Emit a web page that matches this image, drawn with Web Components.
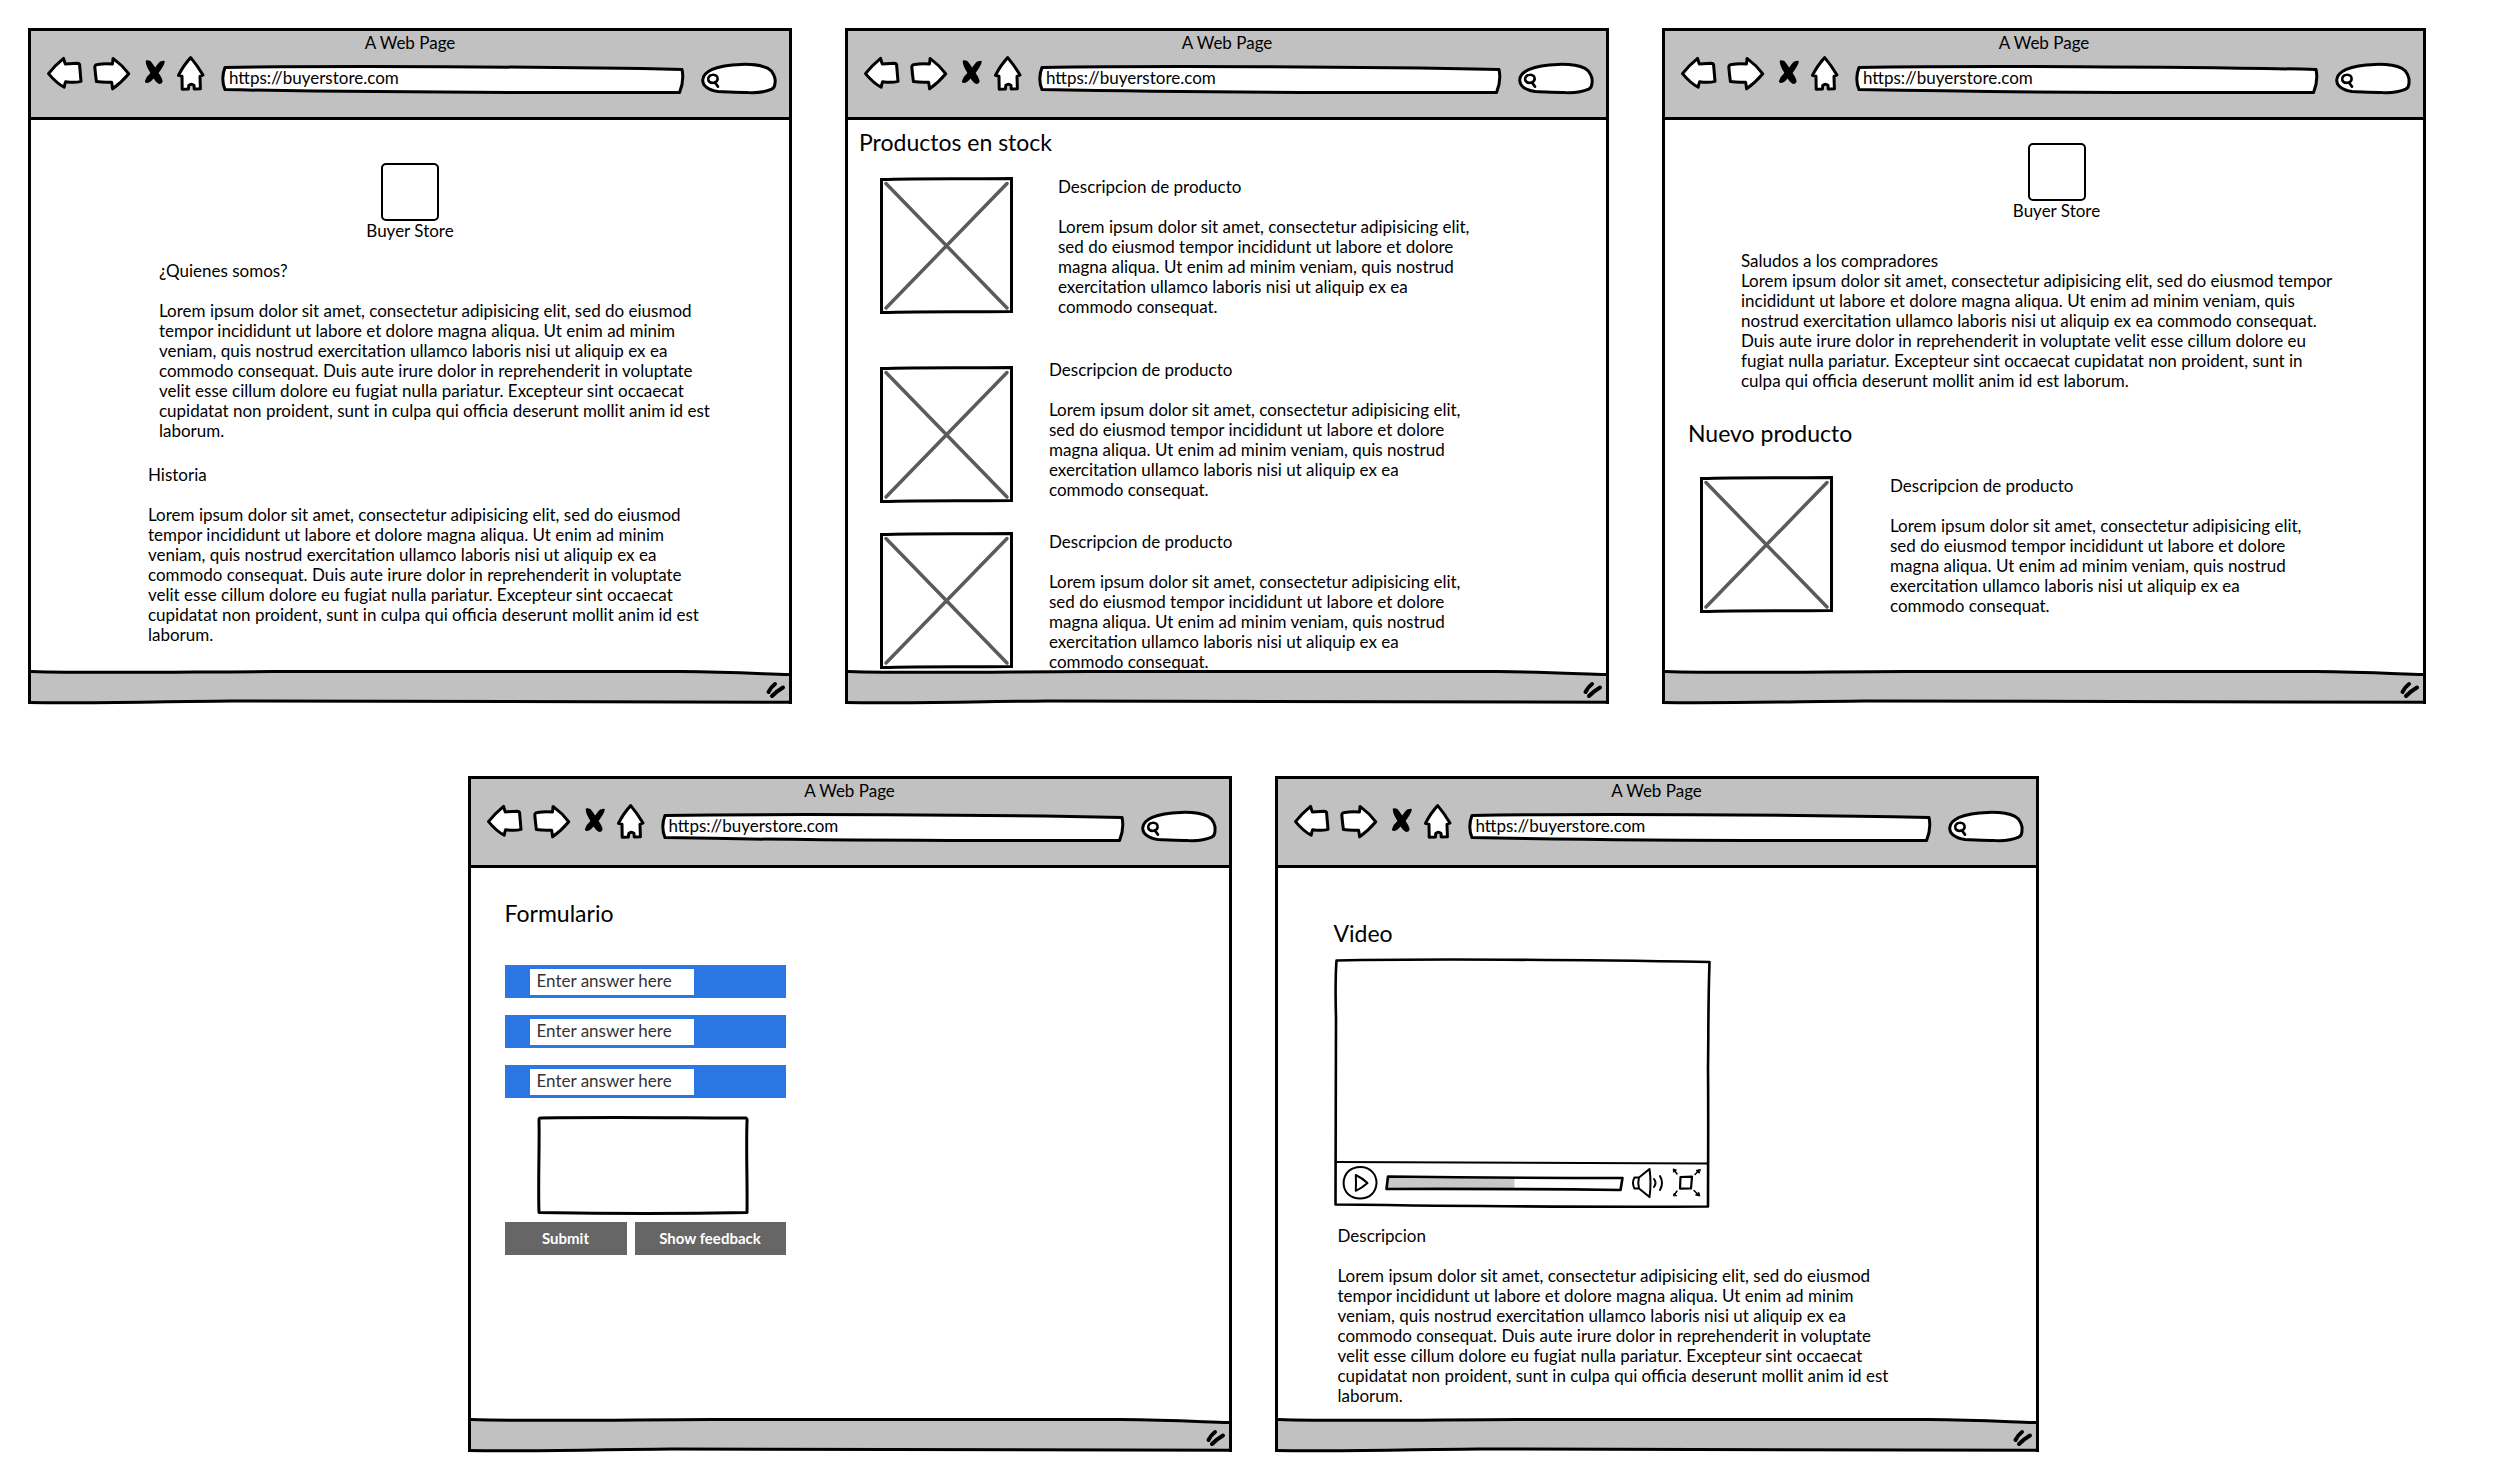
<!DOCTYPE html>
<html lang="es">
<head>
<meta charset="utf-8">
<title>Buyer Store wireframes</title>
<style>
  :root { --frame-width: calc((100vw - 214px) / 3); }
  body {
    margin: 0; padding: 28px 0; background: #fff; color: #000;
    font: 17px/20px Lato, "Liberation Sans", sans-serif;
    display: flex; flex-direction: column; gap: 72px; box-sizing: border-box;
  }
  main { display: contents; }
  .row { display: flex; }
  .row.top { gap: 53px; padding-left: 28px; }
  .row.bottom { gap: 43px; justify-content: center; }
  wire-browser { width: var(--frame-width); flex: none; }
  h2, h3, p { margin: 0; font-weight: 400; }
  h2 { font-size: 23px; line-height: 28px; }
  h3 { font-size: inherit; }

  .about { padding-top: 43px; }
  .about text-block:first-of-type { margin: 20px 0 24px 128px; }
  .about text-block:last-of-type { margin-left: 117px; }

  .stock { padding: 8px 0 0 11px; }
  .stock product-card { margin-left: 21px; }
  .stock product-card:nth-of-type(1) { margin-top: 21px; --gap: 45px; }
  .stock product-card:nth-of-type(2) { margin-top: 43px; --gap: 36px; --drop: 6px; }
  .stock product-card:nth-of-type(3) { margin-top: 29px; --gap: 36px; }

  .home { padding-top: 23px; }
  .home brand-mark { padding-left: 25px; }
  .home text-block { margin: 30px 0 28px 76px; }
  .home h2 { margin-left: 23px; }
  .home product-card { margin: 29px 0 0 35px; --gap: 57px; }

  .form { padding: 31px 0 0 34px; }
  .form answer-form { margin-top: 38px; }

  .media { padding: 51px 0 0 56px; }
  .media sketch-player { margin: 11px 0 18px; }
  .media text-block { margin-left: 4px; }
</style>
</head>
<body>

<template id="tpl-browser">
  <style>
    :host { display: flex; flex-direction: column; box-sizing: border-box; aspect-ratio: 764 / 676;
            border: 3px solid #000; border-bottom: 0; background: #fff; }
    header { background: #c1c1c1; border-bottom: 3px solid #000; padding: 2px 12px 23px 15px; }
    .title { text-align: center; padding-right: 3px; margin-bottom: 3px; }
    .bar { display: flex; gap: 17px; height: 38px; align-items: flex-end; }
    nav { display: flex; gap: 10px; align-self: flex-start; }
    button { all: unset; display: block; cursor: pointer; }
    svg { display: block; overflow: visible; }
    .line { fill: #fff; stroke: #000; stroke-width: 3; stroke-linejoin: round; stroke-linecap: round; }
    label { display: grid; }
    label > svg, label > input { grid-area: 1 / 1; width: 100%; height: 100%; box-sizing: border-box; min-width: 0; }
    input { appearance: none; border: 0; outline: 0; background: none; margin: 0; font: inherit; color: inherit; }
    .url { flex: 1; height: 29px; min-width: 0; }
    .url input { padding: 0 8px 4px 7px; }
    .find { width: 76px; height: 32px; }
    .find input { padding: 0 8px 0 22px; }
    .view { flex: 1; min-height: 0; overflow: hidden; }
    footer svg { width: 100%; height: 34px; }
  </style>
  <header>
    <div class="title"></div>
    <div class="bar">
      <nav>
        <button aria-label="Back"><svg width="37" height="36" viewBox="0 0 37 36"><path class="line" d="M2.5 17.6 C7 12 12 7 17.6 2.4 C18 4 18.6 6 19.3 7.9 L31 7.2 Q33.4 7.2 33.6 9 L35 25.4 Q29 27 19.6 25.8 Q18.8 28 18.2 31.2 C12 28 7 23 2.5 17.6Z"/></svg></button>
        <button aria-label="Forward"><svg width="38" height="36" viewBox="0 0 38 36"><path class="line" d="M1.8 11 Q2 8.6 4.6 8.4 Q12 7.2 19.4 8 Q20 5 20 2.4 Q29 9 35.8 17.8 Q28 27 19.6 32.8 Q19.2 29 18.6 26.2 Q10 26.6 3.4 25.6 Q2.4 18 1.8 11Z"/></svg></button>
        <button aria-label="Stop"><svg width="26" height="36" viewBox="0 0 26 36"><path d="M4.8 4.6 Q9 3 11.4 7.4 L14.2 11.6 Q18 5.6 20 5.2 Q24 4.400 23.800 5.400 Q23.400 9 17.600 17 Q21.600 22.800 21.600 25.600 Q21 28.200 18.600 28 Q16 27.600 12.600 22.400 Q8.600 27 5.800 27 Q3.400 26.600 4.200 24.400 Q5.400 20.600 9.400 17 Q4.200 9 4.800 4.600Z"/></svg></button>
        <button aria-label="Home"><svg width="28" height="36" viewBox="0 0 28 36"><path class="line" d="M13.700 1.600 Q20 9 26 19 L23 20.400 L23.400 32.800 L17.200 33 L17 29.400 Q14.400 27 11.800 29.400 L11.400 33 L5.200 33.200 L5 20.200 L1.400 19.400 Q7 8.600 13.700 1.600Z"/></svg></button>
      </nav>
      <label class="url"><svg viewBox="0 0 462 29" preserveAspectRatio="none"><path class="line" d="M3 2.400 C120 .8 320 1.600 460 4.400 C461.600 12 460.600 20 457.600 27.400 C300 28 150 27.400 3 24.600 Q-1.400 14 3 2.400Z"/></svg><input type="text" aria-label="Address"></label>
      <label class="find"><svg viewBox="0 0 76 32"><path class="line" d="M1.700 18 C2 10 14 3 40 2.400 C52 2 62 4 67 6.400 C72 9 75 16 74 21 C74 24 73 26 70.700 27.200 C63 30.600 55 31 47 30.600 C36 29.800 26 30 17 29.600 C8 28 1.700 24 1.700 18Z"/><path d="M11.400 12.800 C15 12.400 17 14.600 16.600 17.600 C16 21 9 22.400 7.400 18.600 C6.400 15.600 8.400 13 11.400 12.800Z M14 20.600 L17 24.600" fill="none" stroke="#000" stroke-width="2.600" stroke-linecap="round"/></svg><input type="text" aria-label="Search"></label>
    </div>
  </header>
  <div class="view"><slot></slot></div>
  <footer><svg viewBox="0 0 758 34" preserveAspectRatio="none">
    <path d="M0 1 L60 2.500 L300 1.500 L650 1.500 L758 4.500 V32 H0Z" fill="#c1c1c1"/>
    <path d="M0 1.500 C60 3.400 140 2 240 1.600 C400 1 540 .6 650 1.600 C700 2.200 730 3.800 758 4.600" fill="none" stroke="#000" stroke-width="3"/>
    <path d="M-3 32.400 C60 33.400 120 31.600 200 31 C340 31.600 500 33 761 32.200" fill="none" stroke="#000" stroke-width="3"/>
    <path d="M744 14 Q740 17 737.500 22 M752 17.500 Q746 21 741 26" fill="none" stroke="#000" stroke-width="4" stroke-linecap="round"/>
  </svg></footer>
</template>

<template id="tpl-brand">
  <style>
    :host { display: flex; flex-direction: column; align-items: center; }
    .box { width: 58px; height: 58px; box-sizing: border-box; border: 2px solid #000; border-radius: 5px; }
  </style>
  <div class="box"></div>
  <div class="name"><slot></slot></div>
</template>

<template id="tpl-text">
  <style>
    :host { display: flex; flex-direction: column; gap: 20px; white-space: nowrap; }
    :host([tight]) { gap: 0; }
  </style>
  <slot></slot>
</template>

<template id="tpl-product">
  <style>
    :host { display: flex; align-items: flex-start; gap: var(--gap, 40px); }
    svg { display: block; flex: none; margin-top: var(--drop, 0); }
  </style>
  <svg width="133" height="137" viewBox="0 0 133 137" role="img" aria-label="Imagen del producto">
    <path d="M1.500 2.500 C40 1 90 2 131.500 1.500 V134.500 C90 135 50 134 1.500 135.500Z" fill="#fff" stroke="#000" stroke-width="3"/>
    <path d="M6 6.500 L127 131 M127 6.500 L6 131" stroke="#5b5b5b" stroke-width="3.500" stroke-linecap="round"/>
  </svg>
  <text-block><slot></slot></text-block>
</template>

<template id="tpl-form">
  <style>
    :host { display: block; }
    form { display: flex; flex-direction: column; width: 281px; gap: 17px; }
    .field { display: block; background: #2b78e4; padding: 4px 25px 3px; }
    .field input { display: block; box-sizing: border-box; width: 164px; height: 26px; border: 0; padding: 0 7px 3px;
            background: #fff; color: #333; font: inherit; outline: 0; }
    .notes { display: grid; width: 212px; height: 99px; margin: 1px 0 -10px 32px; }
    .notes > * { grid-area: 1 / 1; width: 100%; height: 100%; box-sizing: border-box; }
    textarea { border: 0; background: none; resize: none; outline: 0; padding: 8px; font: inherit; }
    .actions { display: flex; gap: 8px; }
    button { border: 0; height: 33px; padding: 0 0 1px; background: #666; color: #fff; font: inherit; font-size: 15px; font-weight: 700; flex: 122; }
    button + button { flex: 151; }
  </style>
  <form onsubmit="return false">
    <label class="field"><input type="text" value="Enter answer here" aria-label="Respuesta 1"></label>
    <label class="field"><input type="text" value="Enter answer here" aria-label="Respuesta 2"></label>
    <label class="field"><input type="text" value="Enter answer here" aria-label="Respuesta 3"></label>
    <label class="notes">
      <svg viewBox="0 0 212 99" preserveAspectRatio="none"><path d="M2 3.500 Q2 2 4 2 C80 .8 150 2 209 2 Q210.500 3 210 5 C209 35 210.500 65 210 96.500 C150 97.600 70 97.600 2 96.500 C1 70 2.600 30 2 3.500Z" fill="#fff" stroke="#000" stroke-width="3" stroke-linejoin="round"/></svg>
      <textarea aria-label="Comentarios"></textarea>
    </label>
    <div class="actions"><button type="submit">Submit</button><button type="button">Show feedback</button></div>
  </form>
</template>

<template id="tpl-player">
  <style>
    :host { display: grid; width: 377px; height: 250px; }
    .outline, .layer { grid-area: 1 / 1; width: 100%; height: 100%; box-sizing: border-box; }
    .layer { display: flex; flex-direction: column; justify-content: flex-end; padding: 0 9px 7px 8px; }
    .controls { display: flex; align-items: center; gap: 7px; }
    svg { display: block; overflow: visible; fill: none; stroke: #000; stroke-width: 2; stroke-linejoin: round; stroke-linecap: round; }
    button { all: unset; display: block; cursor: pointer; }
    .seek { flex: 1; display: grid; height: 16px; min-width: 0; }
    .seek > * { grid-area: 1 / 1; width: 100%; height: 100%; margin: 0; min-width: 0; }
    input { opacity: 0; }
  </style>
  <svg class="outline" viewBox="0 0 377 250" preserveAspectRatio="none">
    <path d="M2.500 2.500 C100 .6 250 2 375.500 4 C374 50 374.500 80 374 110 C374.500 160 374 210 374 248.500 C250 249.500 120 248 1.500 246.500 C2 160 1.600 110 2 60 Q1 25 2.500 2.500Z" fill="#fff" stroke-width="2.600"/>
    <path d="M1.500 204 Q190 204.600 374 205.500"/>
  </svg>
  <div class="layer"><div class="controls">
    <button aria-label="Play"><svg width="36" height="36" viewBox="0 0 36 36"><path d="M18.500 2 C28 2 34.500 9 34.500 18 C34 28 27 33.600 18 33.600 C9 33.600 2 28 1.600 18.500 C1.600 8 9 2 18.500 2Z M13.800 10 Q20 13 25.500 18 Q20 23 13.800 25.800 Q14.200 18 13.800 10Z"/></svg></button>
    <label class="seek">
      <svg viewBox="0 0 240 16" preserveAspectRatio="none"><path d="M3 1.500 L130 2.500 V14 H2Z" fill="#c8c8c8" stroke="none"/><path d="M3 1.500 Q120 3 238.500 3 L236.500 15 Q120 13.600 1.500 14 Z" stroke-width="2.600"/></svg>
      <input type="range" value="54" aria-label="Seek">
    </label>
    <button aria-label="Volume"><svg width="34" height="32" viewBox="0 0 34 32"><path d="M3.500 10.500 Q.5 16 3.500 21.500 L8 21.500 Q6.500 16 8 10.500Z M8 10.500 L18.500 2 Q20.500 16 18.500 30 L8 21.500"/><path d="M23 12 Q26 16 23 20 M29 9 Q33 16 29 23"/></svg></button>
    <button aria-label="Fullscreen"><svg width="30" height="32" viewBox="0 0 30 32"><path d="M8.500 10 L20 9.600 L19 21.400 L8 21.600Z" stroke-width="2.200"/><path d="M5 7 L2.500 3.500 M23 7.500 L26.500 4 M5 24 L2.500 27.500 M22 23.500 L26 27.500" stroke-width="1.500"/><path d="M1.500 2 L4.500 3 L2 5Z M28 2.500 L24 3.500 L27 6Z M1.500 28.500 L2 26.500 L4.500 28.500Z M27.500 29 L23.500 28 L26.500 25.500Z" fill="#000" stroke-width="1"/></svg></button>
  </div></div>
</template>

<main>
  <section class="row top">
    <wire-browser heading="A Web Page" address="https://buyerstore.com">
      <div class="about">
        <brand-mark>Buyer Store</brand-mark>
        <text-block>
          <h3>¿Quienes somos?</h3>
          <p>Lorem ipsum dolor sit amet, consectetur adipisicing elit, sed do eiusmod<br>tempor incididunt ut labore et dolore magna aliqua. Ut enim ad minim<br>veniam, quis nostrud exercitation ullamco laboris nisi ut aliquip ex ea<br>commodo consequat. Duis aute irure dolor in reprehenderit in voluptate<br>velit esse cillum dolore eu fugiat nulla pariatur. Excepteur sint occaecat<br>cupidatat non proident, sunt in culpa qui officia deserunt mollit anim id est<br>laborum.</p>
        </text-block>
        <text-block>
          <h3>Historia</h3>
          <p>Lorem ipsum dolor sit amet, consectetur adipisicing elit, sed do eiusmod<br>tempor incididunt ut labore et dolore magna aliqua. Ut enim ad minim<br>veniam, quis nostrud exercitation ullamco laboris nisi ut aliquip ex ea<br>commodo consequat. Duis aute irure dolor in reprehenderit in voluptate<br>velit esse cillum dolore eu fugiat nulla pariatur. Excepteur sint occaecat<br>cupidatat non proident, sunt in culpa qui officia deserunt mollit anim id est<br>laborum.</p>
        </text-block>
      </div>
    </wire-browser>

    <wire-browser heading="A Web Page" address="https://buyerstore.com">
      <div class="stock">
        <h2>Productos en stock</h2>
        <product-card>
          <h3>Descripcion de producto</h3>
          <p>Lorem ipsum dolor sit amet, consectetur adipisicing elit,<br>sed do eiusmod tempor incididunt ut labore et dolore<br>magna aliqua. Ut enim ad minim veniam, quis nostrud<br>exercitation ullamco laboris nisi ut aliquip ex ea<br>commodo consequat.</p>
        </product-card>
        <product-card>
          <h3>Descripcion de producto</h3>
          <p>Lorem ipsum dolor sit amet, consectetur adipisicing elit,<br>sed do eiusmod tempor incididunt ut labore et dolore<br>magna aliqua. Ut enim ad minim veniam, quis nostrud<br>exercitation ullamco laboris nisi ut aliquip ex ea<br>commodo consequat.</p>
        </product-card>
        <product-card>
          <h3>Descripcion de producto</h3>
          <p>Lorem ipsum dolor sit amet, consectetur adipisicing elit,<br>sed do eiusmod tempor incididunt ut labore et dolore<br>magna aliqua. Ut enim ad minim veniam, quis nostrud<br>exercitation ullamco laboris nisi ut aliquip ex ea<br>commodo consequat.</p>
        </product-card>
      </div>
    </wire-browser>

    <wire-browser heading="A Web Page" address="https://buyerstore.com">
      <div class="home">
        <brand-mark>Buyer Store</brand-mark>
        <text-block tight>
          <h3>Saludos a los compradores</h3>
          <p>Lorem ipsum dolor sit amet, consectetur adipisicing elit, sed do eiusmod tempor<br>incididunt ut labore et dolore magna aliqua. Ut enim ad minim veniam, quis<br>nostrud exercitation ullamco laboris nisi ut aliquip ex ea commodo consequat.<br>Duis aute irure dolor in reprehenderit in voluptate velit esse cillum dolore eu<br>fugiat nulla pariatur. Excepteur sint occaecat cupidatat non proident, sunt in<br>culpa qui officia deserunt mollit anim id est laborum.</p>
        </text-block>
        <h2>Nuevo producto</h2>
        <product-card>
          <h3>Descripcion de producto</h3>
          <p>Lorem ipsum dolor sit amet, consectetur adipisicing elit,<br>sed do eiusmod tempor incididunt ut labore et dolore<br>magna aliqua. Ut enim ad minim veniam, quis nostrud<br>exercitation ullamco laboris nisi ut aliquip ex ea<br>commodo consequat.</p>
        </product-card>
      </div>
    </wire-browser>
  </section>

  <section class="row bottom">
    <wire-browser heading="A Web Page" address="https://buyerstore.com">
      <div class="form">
        <h2>Formulario</h2>
        <answer-form></answer-form>
      </div>
    </wire-browser>

    <wire-browser heading="A Web Page" address="https://buyerstore.com">
      <div class="media">
        <h2>Video</h2>
        <sketch-player></sketch-player>
        <text-block>
          <h3>Descripcion</h3>
          <p>Lorem ipsum dolor sit amet, consectetur adipisicing elit, sed do eiusmod<br>tempor incididunt ut labore et dolore magna aliqua. Ut enim ad minim<br>veniam, quis nostrud exercitation ullamco laboris nisi ut aliquip ex ea<br>commodo consequat. Duis aute irure dolor in reprehenderit in voluptate<br>velit esse cillum dolore eu fugiat nulla pariatur. Excepteur sint occaecat<br>cupidatat non proident, sunt in culpa qui officia deserunt mollit anim id est<br>laborum.</p>
        </text-block>
      </div>
    </wire-browser>
  </section>
</main>

<script>
  class TemplateElement extends HTMLElement {
    constructor() {
      super();
      const tpl = document.getElementById(this.constructor.template);
      this.attachShadow({ mode: "open" }).append(tpl.content.cloneNode(true));
    }
  }
  class TextBlock extends TemplateElement { static template = "tpl-text"; }
  class BrandMark extends TemplateElement { static template = "tpl-brand"; }
  class ProductCard extends TemplateElement { static template = "tpl-product"; }
  class AnswerForm extends TemplateElement { static template = "tpl-form"; }
  class SketchPlayer extends TemplateElement { static template = "tpl-player"; }
  class WireBrowser extends TemplateElement {
    static template = "tpl-browser";
    connectedCallback() {
      this.shadowRoot.querySelector(".title").textContent = this.getAttribute("heading");
      this.shadowRoot.querySelector(".url input").value = this.getAttribute("address");
    }
  }
  customElements.define("text-block", TextBlock);
  customElements.define("brand-mark", BrandMark);
  customElements.define("product-card", ProductCard);
  customElements.define("answer-form", AnswerForm);
  customElements.define("sketch-player", SketchPlayer);
  customElements.define("wire-browser", WireBrowser);
</script>
</body>
</html>
